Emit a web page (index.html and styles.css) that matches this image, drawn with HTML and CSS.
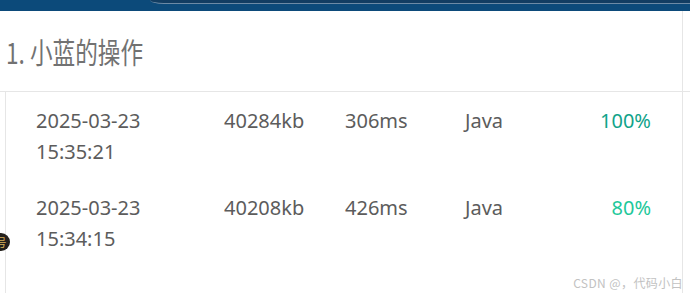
FILE: index.html
```html
<!DOCTYPE html>
<html lang="zh-CN">
<head>
<meta charset="utf-8">
<title>小蓝的操作</title>
<link rel="stylesheet" href="styles.css">
</head>
<body>
<div class="topbar"><div class="topbar-panel"></div></div>
<div class="page">
  <div class="title-cell"><h1 class="title">1. 小蓝的操作</h1></div>
  <div class="title-fill"></div>
  <div class="list-cell">
    <div class="list">
      <div class="row">
        <div class="date">2025-03-23<br>15:35:21</div>
        <div>40284kb</div>
        <div>306ms</div>
        <div>Java</div>
        <div class="score full">100%</div>
      </div>
      <div class="row">
        <div class="date">2025-03-23<br>15:34:15</div>
        <div>40208kb</div>
        <div>426ms</div>
        <div>Java</div>
        <div class="score part">80%</div>
      </div>
    </div>
    <span class="badge">号</span>
  </div>
  <div class="list-fill"></div>
  <div class="watermark">CSDN @，代码小白</div>
</div>
</body>
</html>
```
FILE: styles.css
```css
* { box-sizing: border-box; }
html, body { margin: 0; padding: 0; background: #fff; }
body {
  width: 690px;
  height: 293px;
  overflow: hidden;
  font-family: "Noto Sans", "Noto Sans CJK SC", sans-serif;
}
.topbar {
  height: 11px;
  background: #0c4a7a;
  display: flex;
}
.topbar-panel {
  margin-left: 150px;
  flex: 1;
  height: 4px;
  background: #123d62;
  border-bottom: 1px solid #6c8aa5;
  border-bottom-left-radius: 14px 4px;
}
.page {
  position: relative;
  display: grid;
  grid-template-columns: 683px 1fr;
  grid-template-rows: 81px 201px;
}
.title-cell {
  border-right: 1px solid #e6e6e6;
  border-bottom: 1px solid #e6e6e6;
  display: flex;
  align-items: center;
  padding-left: 6px;
}
.title-fill { border-bottom: 1px solid #e6e6e6; }
.title {
  margin: 1px 0 0;
  font-family: "Noto Sans CJK SC", sans-serif;
  font-weight: 400;
  font-size: 29px;
  color: #727272;
  line-height: 1;
  transform: scaleX(0.78);
  transform-origin: left center;
  white-space: nowrap;
}
.list-cell {
  position: relative;
  border-right: 1px solid #e6e6e6;
  padding-left: 5px;
}
.list {
  height: 100%;
  border-left: 1px solid #e6e6e6;
  padding: 13px 31px 0 30px;
  display: flex;
  flex-direction: column;
  gap: 25px;
}
.row {
  display: grid;
  grid-template-columns: 188px 121px 120px 1fr auto;
  font-size: 20px;
  line-height: 31px;
  color: #5c5c5c;
}
.score { text-align: right; }
.score.full { color: #11a38a; }
.score.part { color: #1ec89a; }
.badge {
  position: absolute;
  left: -8px;
  top: 141px;
  width: 18px;
  height: 18px;
  border-radius: 50%;
  background: #24211d;
  color: #d8b05a;
  font-family: "Noto Sans CJK SC", sans-serif;
  font-size: 11px;
  line-height: 18px;
  text-align: center;
}
.watermark {
  position: absolute;
  right: 7px;
  bottom: 3px;
  font-family: "Noto Sans CJK SC", sans-serif;
  font-size: 12px;
  letter-spacing: 0.4px;
  color: #c2c2c2;
  line-height: 14px;
}
```
